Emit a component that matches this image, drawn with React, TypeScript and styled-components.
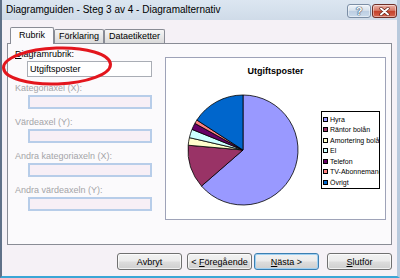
import React from 'react';
import styled, { createGlobalStyle } from 'styled-components';

const GlobalStyle = createGlobalStyle`
  html, body {
    margin: 0;
    padding: 0;
    background: #f5f1f6;
  }
  body {
    font-family: "Liberation Sans", Arial, sans-serif;
  }
  * {
    box-sizing: border-box;
  }
`

const Window = styled.div`
  position: relative;
  width: 400px;
  height: 278px;
  display: flex;
  flex-direction: column;
  background: #f5f1f6;
  border-left: 2px solid #5f7188;
  border-right: 3px solid #b8c9dc;
  border-bottom: 2px solid #3aa6d6;
  overflow: hidden;
`

const TitleBar = styled.div`
  height: 20px;
  display: flex;
  align-items: flex-start;
  padding-left: 4px;
  background: linear-gradient(#dce6f1, #cfdbe8);
`

const TitleText = styled.div`
  flex: 1;
  font-size: 10px;
  line-height: 20px;
  color: #000;
`

const CaptionButtons = styled.div`
  display: flex;
  gap: 1px;
  margin-top: 4px;
`

const CaptionButton = styled.div<{ $close?: boolean }>`
  width: ${({ $close }) => ($close ? 25 : 24)}px;
  height: 14px;
  display: flex;
  align-items: center;
  justify-content: center;
  border-radius: 3px;
  border: 1px solid ${({ $close }) => ($close ? '#6e2f27' : '#7b8ea5')};
  background: ${({ $close }) =>
    $close
      ? 'linear-gradient(#eab1a6, #d87b68 45%, #c4412a 52%, #d5654f)'
      : 'linear-gradient(#eef3f9, #d6e1ec 45%, #bccee2 52%, #cbdbec)'};
  box-shadow: inset 0 0 0 1px rgba(255, 255, 255, 0.45);
  color: #fff;
  font-size: 11px;
  font-weight: bold;
  line-height: 12px;
  text-shadow: 0 0 1px #2f4560, 0 0 1px #2f4560, 0 0 1px #2f4560;
`

const Body = styled.div`
  flex: 1;
  display: flex;
  flex-direction: column;
  padding: 7px 5px 0 5px;
`

const Tabs = styled.div`
  height: 16px;
  display: flex;
  align-items: flex-end;
  padding-left: 3px;
`

const Tab = styled.div<{ $active?: boolean }>`
  position: relative;
  z-index: ${({ $active }) => ($active ? 1 : 0)};
  height: ${({ $active }) => ($active ? 17 : 14)}px;
  margin-bottom: ${({ $active }) => ($active ? -1 : 0)}px;
  padding: 0 ${({ $active }) => ($active ? 8 : 4)}px;
  border: 1px solid #898c95;
  border-bottom: none;
  border-radius: 2px 2px 0 0;
  background: ${({ $active }) =>
    $active ? '#fbfafc' : 'linear-gradient(#f6f6f6, #e8e8e8 50%, #dadada)'};
  font-size: 9px;
  line-height: ${({ $active }) => ($active ? 15 : 13)}px;
  color: #000;
`

const Panel = styled.div`
  height: 202px;
  display: flex;
  padding: 4px 5px 0 7px;
  border: 1px solid #898c95;
  background: #fbfafc;
`

const FormColumn = styled.div`
  width: 150px;
  display: flex;
  flex-direction: column;
`

const Field = styled.div<{ $space: number }>`
  display: flex;
  flex-direction: column;
  margin-top: ${({ $space }) => $space}px;
`

const FieldLabel = styled.div<{ $disabled?: boolean }>`
  height: 13px;
  font-size: 9px;
  line-height: 13px;
  color: ${({ $disabled }) => ($disabled ? '#a4a4a8' : '#000')};
`

const TextInput = styled.input`
  width: 125px;
  height: 16px;
  margin: 0 0 0 12px;
  padding: 0 2px;
  border: 1px solid #a9adb5;
  background: #fff;
  font-family: "Liberation Sans", Arial, sans-serif;
  font-size: 9px;
  color: #000;
  outline: none;
`

const DisabledInput = styled.input`
  width: 124px;
  height: 14px;
  margin: 0 0 0 13px;
  padding: 0;
  border: 2px solid #b7cde9;
  background: #f7eff6;
  outline: none;
`

const ChartBox = styled.div`
  width: 221px;
  height: 163px;
  margin-top: 9px;
  display: flex;
  flex-direction: column;
  border: 1px solid #9ea3b8;
  background: #fff;
`

const ChartTitle = styled.div`
  padding-top: 7px;
  font-size: 9px;
  font-weight: bold;
  line-height: 12px;
  text-align: center;
  color: #000;
`

const ChartBody = styled.div`
  display: flex;
  align-items: center;
  margin-top: 17px;
  padding-left: 21px;
`

const Legend = styled.div`
  width: 59px;
  margin-left: 22px;
  padding: 2px 0 1px 1px;
  border: 1px solid #000;
  overflow: hidden;
`

const LegendItem = styled.div`
  display: flex;
  align-items: center;
  height: 10.5px;
  white-space: nowrap;
  font-size: 7px;
  color: #000;
`

const Swatch = styled.span<{ $color: string }>`
  flex: none;
  width: 5px;
  height: 5px;
  margin-right: 2px;
  border: 1px solid #000;
  background: ${({ $color }) => $color};
`

const ButtonRow = styled.div`
  display: flex;
  justify-content: flex-end;
  margin-top: 8px;
`

const Button = styled.div<{ $space?: number; $default?: boolean }>`
  width: 65px;
  height: 17px;
  margin-left: ${({ $space }) => $space || 0}px;
  display: flex;
  align-items: center;
  justify-content: center;
  border: 1px solid ${({ $default }) => ($default ? '#3c7fb1' : '#707070')};
  border-radius: 3px;
  background: linear-gradient(#f2f2f2, #ebebeb 48%, #dddddd 52%, #cfcfcf);
  box-shadow: inset 0 0 0 1px ${({ $default }) => ($default ? '#9fd0f2' : 'rgba(255,255,255,0.7)')};
  font-size: 9px;
  color: #000;
  white-space: pre;
`

const Key = styled.span`
  text-decoration: underline;
`

const Marker = styled.svg`
  position: absolute;
  left: -2px;
  top: 0;
  pointer-events: none;
`

const slices = [
  { label: 'Hyra', value: 229, color: '#9999ff' },
  { label: 'Räntor bolån', value: 46, color: '#993366' },
  { label: 'Amortering bolån', value: 8, color: '#ffffcc' },
  { label: 'El', value: 9, color: '#ccffff' },
  { label: 'Telefon', value: 7, color: '#660066' },
  { label: 'TV-Abonnemang', value: 4, color: '#ff8080' },
  { label: 'Övrigt', value: 57, color: '#0066cc' },
];

const slicePath = (c: number, r: number, a0: number, a1: number) => {
  const pt = (a: number) => {
    const rad = (a * Math.PI) / 180;
    return `${(c + r * Math.sin(rad)).toFixed(2)},${(c - r * Math.cos(rad)).toFixed(2)}`;
  };
  const large = a1 - a0 > 180 ? 1 : 0;
  return `M${c},${c} L${pt(a0)} A${r},${r} 0 ${large} 1 ${pt(a1)} Z`;
};

const PieChart = () => {
  const total = slices.reduce((s, x) => s + x.value, 0);
  let start = 0;
  return (
    <svg width="112" height="112" viewBox="0 0 112 112">
      {slices.map((s) => {
        const a0 = start;
        const a1 = start + (s.value / total) * 360;
        start = a1;
        return (
          <path key={s.label} d={slicePath(56, 55, a0, a1)} fill={s.color} stroke="#000" strokeWidth="0.8" strokeLinejoin="round" />
        );
      })}
    </svg>
  );
};

const fields = ['Kategoriaxel (X):', 'Värdeaxel (Y):', 'Andra kategoriaxeln (X):', 'Andra värdeaxeln (Y):'];

const App = () => {
  return (
    <Window>
      <GlobalStyle />
      <TitleBar>
        <TitleText>Diagramguiden - Steg 3 av 4 - Diagramalternativ</TitleText>
        <CaptionButtons>
          <CaptionButton>?</CaptionButton>
          <CaptionButton $close>
            <svg width="11" height="9" viewBox="0 0 11 9">
              <path d="M2 1.5 L9 7.5 M9 1.5 L2 7.5" stroke="#5a1b12" strokeWidth="3.2" strokeLinecap="round" />
              <path d="M2 1.5 L9 7.5 M9 1.5 L2 7.5" stroke="#fff" strokeWidth="2" strokeLinecap="round" />
            </svg>
          </CaptionButton>
        </CaptionButtons>
      </TitleBar>
      <Body>
        <Tabs>
          <Tab $active>Rubrik</Tab>
          <Tab>Förklaring</Tab>
          <Tab>Dataetiketter</Tab>
        </Tabs>
        <Panel>
          <FormColumn>
            <Field $space={0}>
              <FieldLabel><Key>D</Key>iagramrubrik:</FieldLabel>
              <TextInput readOnly value="Utgiftsposter" />
            </Field>
            {fields.map((f, i) => (
              <Field key={f} $space={i === 0 ? 5 : 7}>
                <FieldLabel $disabled>{f}</FieldLabel>
                <DisabledInput disabled />
              </Field>
            ))}
          </FormColumn>
          <ChartBox>
            <ChartTitle>Utgiftsposter</ChartTitle>
            <ChartBody>
              <PieChart />
              <Legend>
                {slices.map((s) => (
                  <LegendItem key={s.label}>
                    <Swatch $color={s.color} />
                    {s.label}
                  </LegendItem>
                ))}
              </Legend>
            </ChartBody>
          </ChartBox>
        </Panel>
        <ButtonRow>
          <Button>Avbryt</Button>
          <Button $space={5}><span>&lt; <Key>F</Key>öregående</span></Button>
          <Button $space={2} $default><span><Key>N</Key>ästa &gt;</span></Button>
          <Button $space={8}><span><Key>S</Key>lutför</span></Button>
        </ButtonRow>
      </Body>
      <Marker width="130" height="100" viewBox="0 0 130 100">
        <ellipse cx="57" cy="66" rx="53.5" ry="18" transform="rotate(-2 57 66)" fill="none" stroke="#e3161d" strokeWidth="3" />
      </Marker>
    </Window>
  );
};

export default App;
